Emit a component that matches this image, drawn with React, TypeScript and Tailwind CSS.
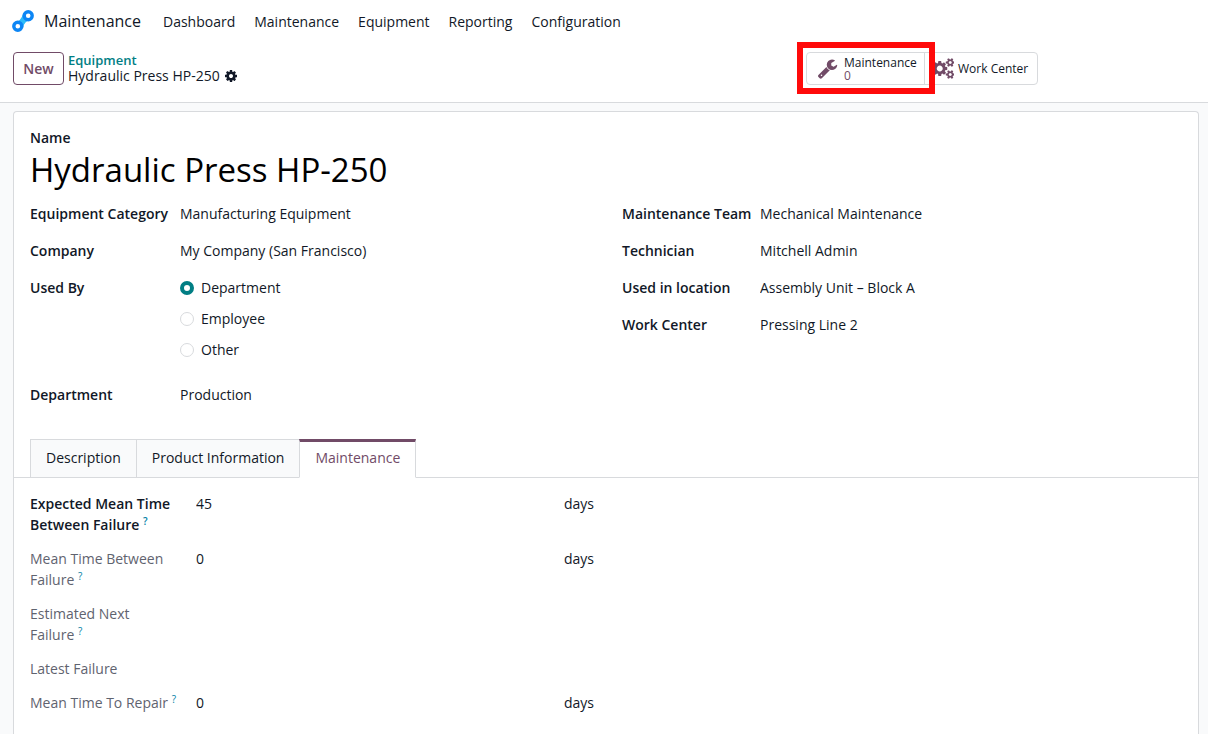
import React, { useState } from 'react';

const COG_PATH =
  'M1152 896q0-106-75-181t-181-75-181 75-75 181 75 181 181 75 181-75 75-181zm512-109v222q0 12-8 23t-20 13l-185 28q-19 54-39 91 35 50 107 138 10 12 10 25t-9 23q-27 37-99 108t-94 71q-12 0-26-9l-138-108q-44 23-91 38-16 136-29 186-7 28-36 28h-222q-14 0-24.500-8.500t-11.500-21.500l-28-184q-49-16-90-37l-141 107q-10 9-25 9-14 0-25-11-126-114-165-168-7-10-7-23 0-12 8-23 15-21 51-66.500t54-70.500q-27-50-41-99l-183-27q-13-2-21-12.500t-8-23.500v-222q0-12 8-23t19-13l186-28q14-46 39-92-40-57-107-138-10-12-10-24 0-10 9-23 26-36 98.500-107.500t94.500-71.500q13 0 26 10l138 107q44-23 91-38 16-136 29-186 7-28 36-28h222q14 0 24.500 8.500t11.500 21.500l28 184q49 16 90 37l142-107q9-9 24-9 13 0 25 10 129 119 165 170 7 8 7 22 0 12-8 23-15 21-51 66.500t-54 70.500q26 50 41 98l183 28q13 2 21 12.500t8 23.500z';

const WRENCH_PATH =
  'M448 1472q0-26-19-45t-45-19-45 19-19 45 19 45 45 19 45-19 19-45zm644-420l-682 682q-37 37-90 37-52 0-91-37l-106-108q-38-36-38-90 0-53 38-91l681-681q39 98 114.500 173.500t173.500 114.500zm634-435q0 39-23 106-47 134-164.500 217.500t-258.500 83.500q-185 0-316.500-131.500t-131.500-316.500 131.500-316.500 316.500-131.500q58 0 121.500 16.500t107.500 46.500q16 11 16 28t-16 28l-293 169v224l193 107q5-3 79-48.500t135.500-81 70.500-35.500q15 0 23.500 10t8.500 25z';

const COGS_PATH =
  'M832 896q0-106-75-181t-181-75-181 75-75 181 75 181 181 75 181-75 75-181zm768 512q0-52-38-90t-90-38-90 38-38 90q0 53 37.500 90.500t90.500 37.500 90.500-37.500 37.500-90.500zm0-1024q0-52-38-90t-90-38-90 38-38 90q0 53 37.500 90.500t90.500 37.500 90.500-37.500 37.500-90.500zm-384 421v185q0 10-7 19.500t-16 10.500l-155 24q-11 35-32 76 34 48 90 115 7 11 7 20 0 12-7 19-23 30-82.500 89.500t-78.500 59.500q-11 0-21-7l-115-90q-37 19-77 31-11 108-23 155-7 24-30 24h-186q-11 0-20-7.500t-10-17.500l-23-153q-34-10-75-31l-118 89q-7 7-20 7-11 0-21-8-144-133-144-160 0-9 7-19 10-14 41-53t47-61q-23-44-35-82l-152-24q-10-1-17-9.500t-7-19.500v-185q0-10 7-19.500t16-10.500l155-24q11-35 32-76-34-48-90-115-7-11-7-20 0-12 7-20 22-30 82-89t79-59q11 0 21 7l115 90q34-18 77-32 11-108 23-154 7-24 30-24h186q11 0 20 7.500t10 17.500l23 153q34 10 75 31l118-89q8-7 20-7 11 0 21 8 144 133 144 160 0 8-7 19-12 16-42 54t-45 60q23 48 34 82l152 23q10 2 17 10.500t7 19.500zm640 533v140q0 16-149 31-12 27-30 52 51 113 51 138 0 4-4 7-122 71-124 71-8 0-46-47t-52-68q-20 2-30 2t-30-2q-14 21-52 68t-46 47q-2 0-124-71-4-3-4-7 0-25 51-138-18-25-30-52-149-15-149-31v-140q0-16 149-31 13-29 30-52-51-113-51-138 0-4 4-7 4-2 35-20t59-34 30-16q8 0 46 46.500t52 67.500q20-2 30-2t30 2q51-71 92-112l6-2q4 0 124 70 4 3 4 7 0 25-51 138 17 23 30 52 149 15 149 31zm0-1024v140q0 16-149 31-12 27-30 52 51 113 51 138 0 4-4 7-122 71-124 71-8 0-46-47t-52-68q-20 2-30 2t-30-2q-14 21-52 68t-46 47q-2 0-124-71-4-3-4-7 0-25 51-138-18-25-30-52-149-15-149-31v-140q0-16 149-31 13-29 30-52-51-113-51-138 0-4 4-7 4-2 35-20t59-34 30-16q8 0 46 46.500t52 67.500q20-2 30-2t30 2q51-71 92-112l6-2q4 0 124 70 4 3 4 7 0 25-51 138 17 23 30 52 149 15 149 31z';

interface IconProps {
  path: string;
  className?: string;
}

const Icon: React.FC<IconProps> = ({ path, className = '' }) => (
  <svg viewBox="0 0 1792 1792" fill="currentColor" aria-hidden="true" className={`shrink-0 ${className}`}>
    <path d={path} />
  </svg>
);

const Logo = () => (
  <svg viewBox="0 0 22 22" aria-hidden="true" className="h-[22px] w-[22px] shrink-0">
    <path d="M3 12.500 Q9 11 11 4 L19 9.500 Q12 11 11 18 Z" fill="#2ebcfa" />
    <circle cx="16.200" cy="5.800" r="4" fill="#fff" stroke="#0d86f5" strokeWidth="3.400" />
    <circle cx="5.800" cy="16.200" r="4" fill="#fff" stroke="#0d86f5" strokeWidth="3.400" />
  </svg>
);

const menuItems = ['Dashboard', 'Maintenance', 'Equipment', 'Reporting', 'Configuration'];

const tabs = ['Description', 'Product Information', 'Maintenance'];

const usedByOptions = ['Department', 'Employee', 'Other'];

const teamFields = [
  { id: 'team', label: 'Maintenance Team', value: 'Mechanical Maintenance' },
  { id: 'technician', label: 'Technician', value: 'Mitchell Admin' },
  { id: 'location', label: 'Used in location', value: 'Assembly Unit – Block A' },
  { id: 'workcenter', label: 'Work Center', value: 'Pressing Line 2' },
];

interface FieldProps {
  id: string;
  label: string;
  value: string;
  labelWidth: string;
}

const Field: React.FC<FieldProps> = ({ id, label, value, labelWidth }) => (
  <div className="flex h-[21px] items-center">
    <label htmlFor={id} className={`shrink-0 font-semibold ${labelWidth}`}>{label}</label>
    <input id={id} type="text" defaultValue={value} className="min-w-0 flex-1 outline-none" />
  </div>
);

const Help = () => <sup className="text-[10px] text-[#0180a5]">?</sup>;

interface StatProps {
  label: React.ReactNode;
  value?: string;
  unit?: string;
}

// Computed figures, shown but never edited
const Stat: React.FC<StatProps> = ({ label, value, unit }) => (
  <div className="flex text-[#5f636f]">
    <span className="w-[166px] shrink-0 font-medium whitespace-nowrap">{label}</span>
    <span className="w-[368px] text-[#111827]">{value}</span>
    <span className="text-[#111827]">{unit}</span>
  </div>
);

export default function App() {
  const [usedBy, setUsedBy] = useState('Department');
  const [activeTab, setActiveTab] = useState('Maintenance');

  return (
    <div className="flex min-h-screen flex-col bg-[#f9fafb] font-['Open_Sans','Noto_Sans',sans-serif] text-sm leading-[21px] text-[#111827]">
      <header className="border-b border-[#d8dadd] bg-white">
        <nav className="flex h-[42px] items-center pl-3">
          <a href="#" className="flex items-center gap-2.5 text-base">
            <Logo />
            Maintenance
          </a>
          <div className="ml-[22px] flex gap-[19px]">
            {menuItems.map((item) => (
              <a key={item} href="#">{item}</a>
            ))}
          </div>
        </nav>

        <div className="flex h-[60px] items-start pt-2.5 pr-[170px] pl-[13px]">
          <button type="button" className="h-[33px] w-[51px] rounded border border-[#714b67] font-semibold text-[#714b67]">New</button>
          <div className="ml-1 flex-1 leading-4">
            <a href="#" className="block text-[13px] font-semibold text-[#017e84]">Equipment</a>
            <div className="flex items-center gap-1">
              <span>Hydraulic Press HP-250</span>
              <button type="button" aria-label="Actions">
                <Icon path={COG_PATH} className="h-3.5 w-3.5" />
              </button>
            </div>
          </div>
          <div className="flex h-[33px] rounded border border-[#d8dadd] text-xs leading-[13px]">
            <div className="relative border-r border-[#d8dadd]">
              <button type="button" className="flex h-full w-[117px] items-center gap-1.5 pl-2.5 text-left">
                <Icon path={WRENCH_PATH} className="h-[21px] w-[21px] text-[#714b67]" />
                <span>
                  <span className="block">Maintenance</span>
                  <span className="block font-medium text-[#714b67]">0</span>
                </span>
              </button>
              <div className="pointer-events-none absolute -top-[11px] -right-[11px] -bottom-2.5 -left-2.5 border-[6px] border-[#ff0a0a]" />
            </div>
            <button type="button" className="flex w-[112px] items-center gap-1 pl-2">
              <Icon path={COGS_PATH} className="h-[21px] w-[21px] text-[#714b67]" />
              <span>Work Center</span>
            </button>
          </div>
        </div>
      </header>

      <main className="flex flex-1 pt-2 pr-[9px] pl-[13px]">
        <div className="flex-1 rounded-t border border-b-0 border-[#d8dadd] bg-white pt-[15px]">
          <div className="px-4">
            <label htmlFor="name" className="block font-semibold">Name</label>
            <input
              id="name"
              type="text"
              defaultValue="Hydraulic Press HP-250"
              className="block h-[42px] w-full text-[33px] text-black outline-none"
            />
          </div>

          <div className="mt-[13px] grid grid-cols-2 px-4">
            <div className="flex flex-col gap-4">
              <Field id="category" label="Equipment Category" value="Manufacturing Equipment" labelWidth="w-[150px]" />
              <Field id="company" label="Company" value="My Company (San Francisco)" labelWidth="w-[150px]" />
              <fieldset className="flex">
                <legend className="float-left w-[150px] font-semibold">Used By</legend>
                <div className="flex flex-col gap-2.5">
                  {usedByOptions.map((option) => (
                    <label key={option} className="flex items-center gap-[7px]">
                      <input
                        type="radio"
                        name="usedBy"
                        checked={usedBy === option}
                        onChange={() => setUsedBy(option)}
                        className="h-3.5 w-3.5 appearance-none rounded-full border border-[#d8dadd] bg-white checked:border-4 checked:border-[#017e84]"
                      />
                      {option}
                    </label>
                  ))}
                </div>
              </fieldset>
              <div className="pt-2">
                <Field id="department" label="Department" value="Production" labelWidth="w-[150px]" />
              </div>
            </div>
            <div className="flex flex-col gap-4 pl-4">
              {teamFields.map((field) => (
                <Field key={field.id} {...field} labelWidth="w-[138px]" />
              ))}
            </div>
          </div>

          <div role="tablist" className="mt-[34px] flex border-b border-[#d8dadd] px-4">
            {tabs.map((tab) => (
              <button
                key={tab}
                type="button"
                role="tab"
                aria-selected={activeTab === tab}
                onClick={() => setActiveTab(tab)}
                className={`-mb-px h-[39px] border px-[15px] ${
                  activeTab === tab
                    ? 'border-t-[3px] border-[#d8dadd] border-t-[#714b67] border-b-white bg-white pb-1 text-[#714b67]'
                    : 'border-r-0 border-[#d8dadd] bg-[#f9fafb] pb-0.5'
                }`}
              >
                {tab}
              </button>
            ))}
          </div>

          <div className="flex flex-col gap-[13px] px-4 pt-[15px]">
            <div className="flex">
              <label htmlFor="expected" className="w-[166px] shrink-0 font-semibold">
                Expected Mean Time<br />Between Failure <Help />
              </label>
              <input id="expected" type="text" defaultValue="45" className="h-[21px] w-[368px] outline-none" />
              <span>days</span>
            </div>
            <Stat label={<>Mean Time Between<br />Failure <Help /></>} value="0" unit="days" />
            <Stat label={<>Estimated Next<br />Failure <Help /></>} />
            <Stat label="Latest Failure" />
            <Stat label={<>Mean Time To Repair <Help /></>} value="0" unit="days" />
          </div>
        </div>
      </main>
    </div>
  );
}
